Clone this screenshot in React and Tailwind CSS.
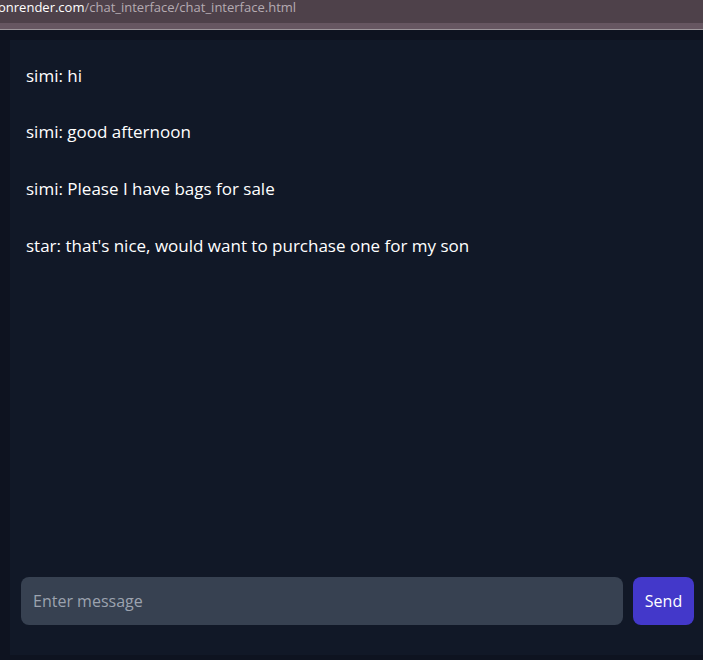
import React, { useState } from "react";

const MESSAGES = [
  { user: "simi", text: "hi" },
  { user: "simi", text: "good afternoon" },
  { user: "simi", text: "Please I have bags for sale" },
  { user: "star", text: "that's nice, would want to purchase one for my son" },
];

export default function App() {
  const [message, setMessage] = useState("");

  return (
    <div className="w-[703px] h-[660px] overflow-hidden bg-[#0e1320] flex flex-col font-['Open_Sans','Noto_Sans',sans-serif]">
      {/* browser url strip */}
      <div className="h-[23px] bg-[#4e414a] flex items-start">
        <span className="text-[13px] leading-[15px] -ml-[2px] text-white">
          onrender.com<span className="text-[#b5abb2]">/chat_interface/chat_interface.html</span>
        </span>
      </div>
      <div className="h-[6px] bg-[#665661]" />
      <div className="h-[1px] bg-[#9e979c]" />

      {/* chat panel */}
      <div className="flex-1 flex flex-col ml-[10px] mb-[5px] mt-[10px] bg-[#111827]">
        <div className="flex-1 px-4 pt-[24px]">
          {MESSAGES.map((m, i) => (
            <p key={i} className="text-white text-[17px] leading-[24px] mb-[33px] first:mb-[32px]">
              {m.user}: {m.text}
            </p>
          ))}
        </div>

        {/* input row */}
        <div className="flex gap-[10px] pl-[11px] pr-[9px] pb-[30px]">
          <input
            type="text"
            value={message}
            onChange={(e) => setMessage(e.target.value)}
            placeholder="Enter message"
            className="flex-1 h-[48px] px-3 bg-[#374151] rounded-lg text-white text-[16px] placeholder:text-[#9ca3af] focus:outline-none"
          />
          <button className="w-[61px] h-[48px] bg-[#4338ca] hover:bg-[#3730a3] text-white text-[16px] rounded-lg">
            Send
          </button>
        </div>
      </div>
    </div>
  );
}
